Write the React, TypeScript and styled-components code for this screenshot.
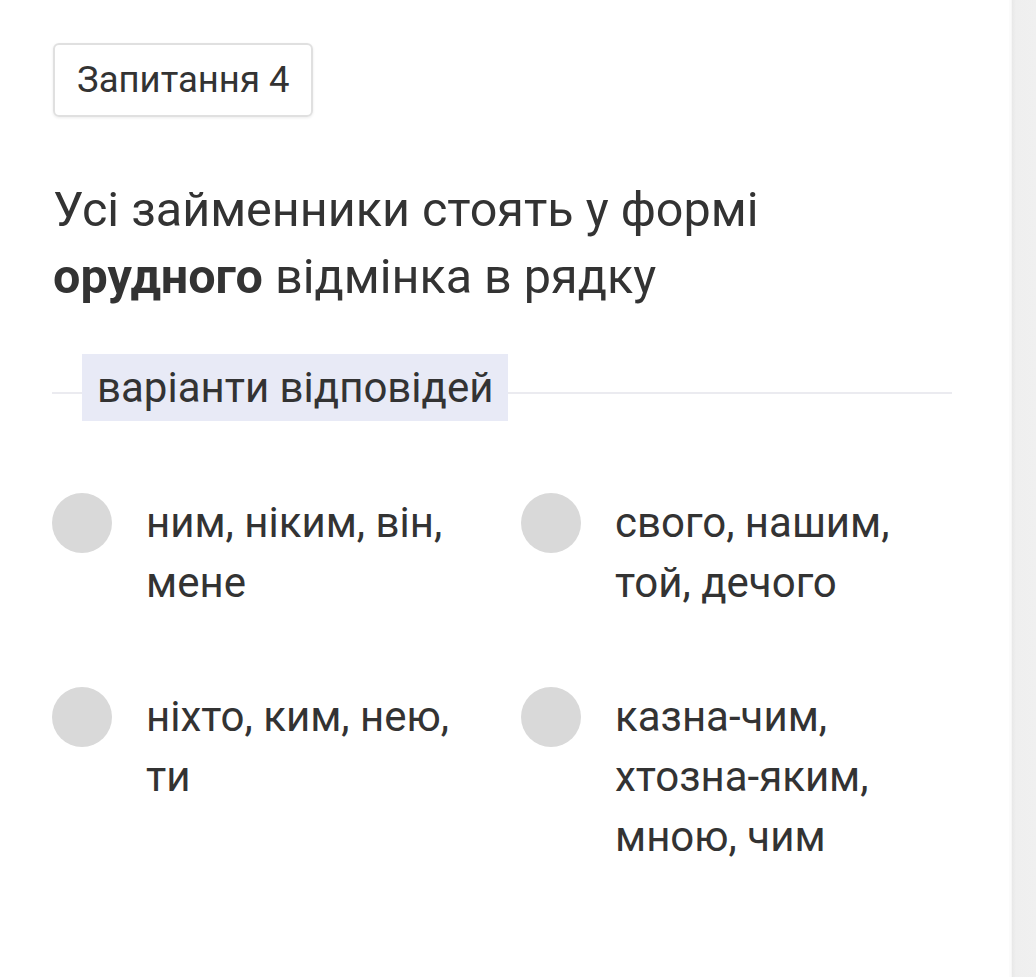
import React from "react";
import styled, { createGlobalStyle } from "styled-components";

const Global = createGlobalStyle`
  html, body { margin: 0; padding: 0; background: #fff; }
  body { font-family: Roboto, "Noto Sans", Arial, sans-serif; color: #333; }
`;

const Page = styled.div`
  display: flex;
  min-height: 977px;
`;

const Main = styled.main`
  flex: 1;
  padding: 43px 60px 0 52px;
`;

const Scrollbar = styled.div`
  width: 24px;
  flex: 0 0 24px;
  background: linear-gradient(to right, #e8e8e8 0px, #efefef 4px, #f0f0f0 100%);
  box-shadow: -1px 0 0 #f6f6f6, -3px 0 0 #fbfbfb;
`;

const Badge = styled.div`
  display: inline-block;
  margin-left: 1px;
  padding: 0 22px;
  height: 70px;
  line-height: 70px;
  border: 2px solid #e0e0e0;
  border-radius: 6px;
  box-shadow: 0 1px 3px rgba(0, 0, 0, 0.08);
  font-size: 36.5px;
  color: #333;
`;

const Question = styled.p`
  margin: 59px 0 0 1px;
  font-size: 48.5px;
  line-height: 67px;
  color: #333;
  b { font-weight: 700; }
`;

const Divider = styled.div`
  position: relative;
  margin-top: 44px;
  display: flex;
  align-items: center;
  &::before {
    content: "";
    position: absolute;
    left: 0;
    right: 0;
    top: calc(50% + 4px);
    height: 2px;
    background: #ebebf0;
  }
`;

const DividerLabel = styled.span`
  position: relative;
  margin-left: 30px;
  padding: 0 15px;
  height: 67px;
  line-height: 67px;
  background: #e8eaf6;
  font-size: 42px;
  color: #333;
`;

const Options = styled.div`
  display: grid;
  grid-template-columns: 469px 1fr;
  row-gap: 74px;
  margin-top: 72px;
`;

const Option = styled.label`
  display: flex;
  align-items: flex-start;
  gap: 34px;
  cursor: pointer;
`;

const Radio = styled.span`
  flex: 0 0 60px;
  width: 60px;
  height: 60px;
  border-radius: 50%;
  background: #d9d9d9;
`;

const OptionText = styled.span`
  font-size: 42px;
  line-height: 60px;
  color: #333;
  max-width: 320px;
`;

const options = [
  "ним, ніким, він, мене",
  "свого, нашим, той, дечого",
  "ніхто, ким, нею, ти",
  "казна-чим, хтозна-яким, мною, чим",
];

export default function App() {
  return (
    <>
      <Global />
      <Page>
        <Main>
          <Badge>Запитання 4</Badge>
          <Question>
            Усі займенники стоять у формі <b>орудного</b> відмінка в рядку
          </Question>
          <Divider>
            <DividerLabel>варіанти відповідей</DividerLabel>
          </Divider>
          <Options>
            {options.map((o) => (
              <Option key={o}>
                <Radio />
                <OptionText>{o}</OptionText>
              </Option>
            ))}
          </Options>
        </Main>
        <Scrollbar />
      </Page>
    </>
  );
}
